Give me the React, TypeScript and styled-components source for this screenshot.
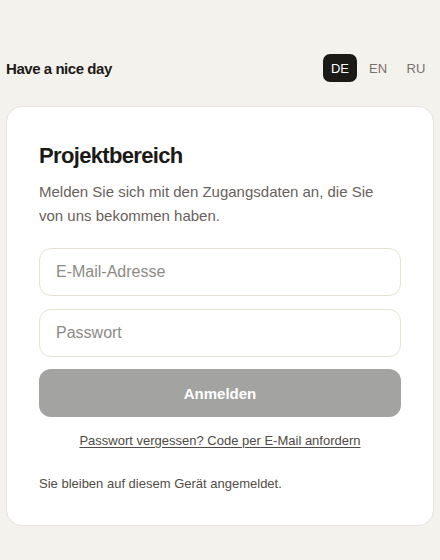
import React, { useState } from "react";
import styled, { createGlobalStyle } from "styled-components";

const GlobalStyle = createGlobalStyle`
  html, body {
    margin: 0;
    padding: 0;
    background: #f4f2ed;
    font-family: "Liberation Sans", Arial, sans-serif;
  }
  * { box-sizing: border-box; }
`;

const Page = styled.div`
  padding: 54px 6px 0;
  display: flex;
  flex-direction: column;
  gap: 24px;
`;

const Header = styled.header`
  display: flex;
  align-items: center;
  justify-content: space-between;
  height: 28px;
`;

const Brand = styled.div`
  font-size: 15px;
  font-weight: 700;
  letter-spacing: -0.03em;
  color: #1c1a17;
`;

const LangGroup = styled.div`
  display: flex;
  gap: 4px;
  margin-right: 1px;
`;

const LangButton = styled.button<{ $active?: boolean }>`
  width: 34px;
  height: 28px;
  border: none;
  border-radius: 7px;
  font-family: inherit;
  font-size: 13px;
  padding: 0;
  cursor: pointer;
  background: ${(p) => (p.$active ? "#1c1a17" : "transparent")};
  color: ${(p) => (p.$active ? "#ffffff" : "#77716a")};
`;

const Card = styled.main`
  background: #ffffff;
  border: 1px solid #e8e4dc;
  border-radius: 16px;
  padding: 32px 32px 31px;
  display: flex;
  flex-direction: column;
`;

const Title = styled.h1`
  margin: 0;
  font-size: 22px;
  line-height: 33px;
  font-weight: 700;
  letter-spacing: -0.03em;
  color: #1c1a17;
`;

const Lead = styled.p`
  margin: 8px 0 0;
  font-size: 15px;
  line-height: 24px;
  color: #67625c;
`;

const Form = styled.form`
  margin-top: 20px;
  display: flex;
  flex-direction: column;
  gap: 12.5px;
`;

const Field = styled.input`
  height: 48px;
  width: 100%;
  border: 1px solid #e6e2d3;
  border-radius: 12px;
  padding: 0 16px;
  font-family: inherit;
  font-size: 16px;
  color: #1c1a17;
  background: #ffffff;
  outline: none;
  &::placeholder {
    color: #8d8a86;
  }
`;

const Submit = styled.button`
  height: 48px;
  border: none;
  border-radius: 12px;
  background: #a3a3a2;
  color: #ffffff;
  font-family: inherit;
  font-size: 15px;
  font-weight: 700;
  cursor: default;
`;

const ResetLink = styled.a`
  margin-top: 14px;
  align-self: center;
  font-size: 13px;
  line-height: 20px;
  color: #4f4a44;
  text-decoration: underline;
  text-underline-offset: 2px;
  cursor: pointer;
`;

const Note = styled.p`
  margin: 23px 0 0;
  font-size: 13px;
  line-height: 20px;
  color: #524d47;
`;

export default function App() {
  const [lang, setLang] = useState("DE");
  return (
    <>
      <GlobalStyle />
      <Page>
        <Header>
          <Brand>Have a nice day</Brand>
          <LangGroup>
            {["DE", "EN", "RU"].map((l) => (
              <LangButton key={l} $active={lang === l} onClick={() => setLang(l)}>
                {l}
              </LangButton>
            ))}
          </LangGroup>
        </Header>
        <Card>
          <Title>Projektbereich</Title>
          <Lead>Melden Sie sich mit den Zugangsdaten an, die Sie von uns bekommen haben.</Lead>
          <Form onSubmit={(e) => e.preventDefault()}>
            <Field type="email" placeholder="E-Mail-Adresse" />
            <Field type="password" placeholder="Passwort" />
            <Submit type="submit">Anmelden</Submit>
          </Form>
          <ResetLink>Passwort vergessen? Code per E-Mail anfordern</ResetLink>
          <Note>Sie bleiben auf diesem Gerät angemeldet.</Note>
        </Card>
      </Page>
    </>
  );
}
